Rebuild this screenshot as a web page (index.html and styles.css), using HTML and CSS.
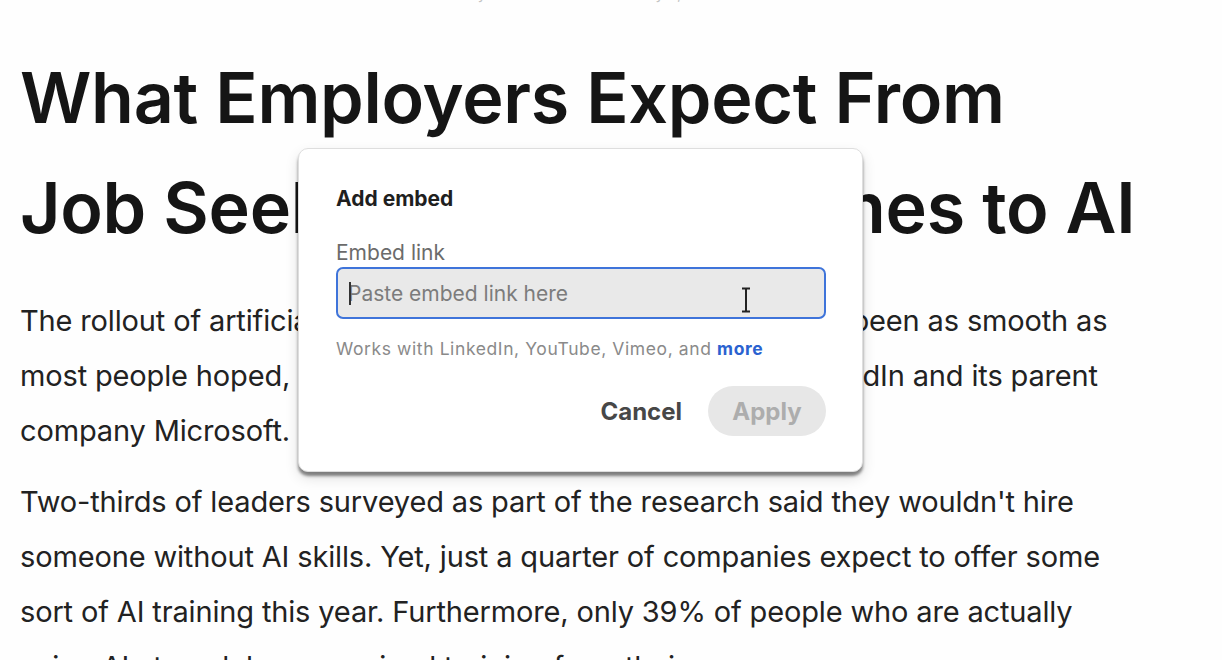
FILE: index.html
```html
<!DOCTYPE html>
<html lang="en">

<head>
    <meta charset="UTF-8">
    <title>What Employers Expect From Job Seekers When It Comes to AI</title>
    <link rel="stylesheet" href="styles.css">
</head>

<body>
    <div class="page">
        <p class="byline">By Senior Contributor &middot; May 9, 2024</p>
        <article class="article">
            <h1>What Employers Expect From<br>Job Seekers When It Comes to AI</h1>
            <p>The rollout of artificial intelligence in the office hasn't exactly been as smooth as<br>most people hoped, according to the new research from LinkedIn and its parent<br>company Microsoft.</p>
            <p>Two-thirds of leaders surveyed as part of the research said they wouldn't hire<br>someone without AI skills. Yet, just a quarter of companies expect to offer some<br>sort of AI training this year. Furthermore, only 39% of people who are actually<br>using AI at work have received training from their company.</p>
        </article>

        <div class="embed-dialog">
            <h2>Add embed</h2>
            <label for="embedLink">Embed link</label>
            <div class="field">
                <span class="caret"></span>
                <input id="embedLink" type="text" placeholder="Paste embed link here">
                <svg class="ibeam" width="10" height="26" viewBox="0 0 10 26">
                    <path d="M1 1.5h8M1 24.5h8M5 1.5v23" stroke="#222" stroke-width="2" fill="none" />
                </svg>
            </div>
            <p class="hint">Works with LinkedIn, YouTube, Vimeo, and <a href="#">more</a></p>
            <div class="actions">
                <button type="button" class="cancel">Cancel</button>
                <button type="button" class="apply" disabled>Apply</button>
            </div>
        </div>
    </div>
</body>

</html>
```

FILE: styles.css
```css
body {
    font-family: 'Inter', 'Liberation Sans', Arial, sans-serif;
    margin: 0;
    padding: 0;
    background: #fefefe;
    color: #1b1b1b;
    overflow: hidden;
}

.page {
    position: relative;
    height: 660px;
    overflow: hidden;
}

.byline {
    margin: -16px 0 0 468px;
    font-size: 15px;
    line-height: 20px;
    color: #c4c4c4;
}

.article {
    padding: 39px 0 0 20px;
}

h1 {
    margin: 0;
    font-size: 70px;
    font-weight: 600;
    line-height: 110px;
    letter-spacing: -0.3px;
    color: #151515;
}

.article p {
    margin: 30px 0 0;
    font-size: 29px;
    line-height: 55px;
    letter-spacing: -0.15px;
    color: #222;
}

.article p + p {
    margin-top: 16px;
}

.embed-dialog {
    position: absolute;
    left: 298px;
    top: 148px;
    width: 490px;
    height: 270px;
    padding: 28px 36px 24px 37px;
    background: #fff;
    border: 1px solid #dedede;
    border-radius: 10px;
    box-shadow: 0 4px 3px rgba(0, 0, 0, 0.45), 0 6px 14px rgba(0, 0, 0, 0.12);
}

.embed-dialog h2 {
    margin: 0;
    font-size: 21px;
    font-weight: 700;
    line-height: 44px;
    color: #1f1f1f;
}

.embed-dialog label {
    display: block;
    margin-top: 21px;
    font-size: 21px;
    line-height: 22px;
    color: #6b6b6b;
}

.field {
    position: relative;
    margin-top: 3px;
    height: 52px;
    box-sizing: border-box;
    border: 2px solid #3f74da;
    border-radius: 7px;
    background: #e9e9e9;
    display: flex;
    align-items: center;
}

.field input {
    flex: 1;
    border: none;
    background: transparent;
    padding: 0 10px;
    font-family: inherit;
    font-size: 21px;
    color: #333;
    outline: none;
}

.field input::placeholder {
    color: #7c7c7c;
}

.caret {
    position: absolute;
    left: 11px;
    top: 13px;
    width: 2px;
    height: 23px;
    background: #333;
}

.ibeam {
    position: absolute;
    left: 403px;
    top: 18px;
}

.hint {
    margin: 20px 0 0;
    font-size: 17.5px;
    line-height: 20px;
    letter-spacing: 0.6px;
    color: #8a8a8a;
}

.hint a {
    color: #2a62d0;
    font-weight: 700;
    text-decoration: none;
}

.actions {
    display: flex;
    justify-content: flex-end;
    align-items: center;
    gap: 26px;
    margin-top: 27px;
}

.actions button {
    font-family: inherit;
    font-size: 24px;
    font-weight: 700;
    border: none;
    cursor: pointer;
}

.cancel {
    background: none;
    color: #474747;
    padding: 0;
}

.apply {
    width: 118px;
    height: 50px;
    border-radius: 25px;
    background: #e7e7e7;
    color: #adadad;
}
```
